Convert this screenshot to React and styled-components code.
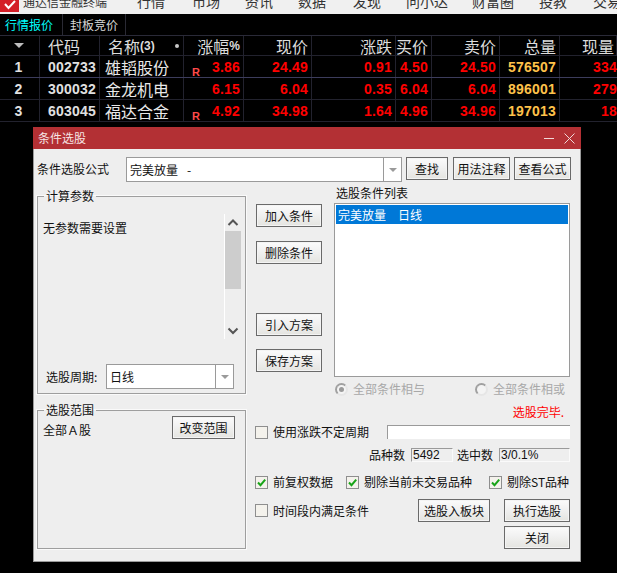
import React from 'react';
import styled, { createGlobalStyle } from 'styled-components';

const CJK = '"Noto Sans CJK SC", "Liberation Sans", sans-serif';
const NUM = '"Liberation Sans", "Noto Sans CJK SC", sans-serif';

const Global = createGlobalStyle`
  html, body { margin: 0; padding: 0; background: #000; }
  * { box-sizing: border-box; }
`;

const Page = styled.div`
  position: relative;
  width: 617px;
  height: 573px;
  overflow: hidden;
  background: #000;
  font-family: ${CJK};
`;

/* ---------- top menu ---------- */
const TopBar = styled.header`
  height: 14px;
  background: #f0f0f0;
  display: flex;
  align-items: flex-end;
  overflow: hidden;
  color: #333;
`;
const Logo = styled.svg`
  flex: none;
  width: 20px;
  height: 13px;
  align-self: flex-start;
  margin-right: 3px;
`;
const Brand = styled.span`
  flex: none;
  width: 114px;
  font-size: 12px;
  line-height: 14px;
  margin-bottom: 5px;
  white-space: nowrap;
`;
const NavItem = styled.span`
  flex: none;
  width: ${p => p.$w}px;
  font-size: 14px;
  line-height: 16px;
  margin-bottom: 5px;
  white-space: nowrap;
`;

/* ---------- tabs ---------- */
const Tabs = styled.nav`
  height: 21px;
  display: flex;
  background: #000;
`;
const Tab = styled.div`
  width: ${p => p.$w}px;
  padding-left: ${p => p.$pl}px;
  font-size: 12px;
  line-height: 21px;
  color: ${p => (p.$active ? '#00ffff' : '#d8d8d8')};
  border-right: 1px solid #2a2a34;
`;

/* ---------- quote table ---------- */
const COLS = '40px 60px 84px 60px 68px 84px 36px 68px 60px 57px';
const TableRow = styled.div`
  display: grid;
  grid-template-columns: ${COLS};
  height: ${p => (p.$head ? 21 : 22)}px;
  background: #000;
  border-top: ${p => (p.$head ? '1px solid #2a2a38' : 'none')};
  border-bottom: 1px solid ${p => (p.$strong ? '#3c3c5c' : '#22222e')};
`;
const Cell = styled.div`
  display: flex;
  align-items: center;
  justify-content: ${p => p.$align || 'flex-end'};
  padding: ${p => p.$pad || '1px 3px 0 0'};
  border-right: 1px solid #22222e;
  overflow: hidden;
  white-space: nowrap;
  color: ${p => p.$color || '#ff0000'};
  font-family: ${NUM};
  font-weight: 700;
  font-size: 14px;
  letter-spacing: 0.2px;
`;
const HeadCell = styled(Cell)`
  font-family: ${CJK};
  font-weight: 400;
  font-size: 16px;
  letter-spacing: 0;
  color: #dcdcdc;
`;
const NameCell = styled(Cell)`
  font-family: ${CJK};
  font-weight: 400;
  font-size: 16px;
  letter-spacing: 0;
  color: #e8e8e8;
`;
const LastCell = styled(Cell)`
  border-right: none;
`;
const Small = styled.b`
  font-family: ${NUM};
  font-size: 12px;
`;
const RMark = styled.span`
  position: absolute;
  left: 8px;
  bottom: -1px;
  font-size: 11px;
  line-height: 12px;
  color: #ff4a4a;
`;
const PctCell = styled(Cell)`
  position: relative;
`;
const SortArrow = styled.i`
  width: 0;
  height: 0;
  border-left: 5px solid transparent;
  border-right: 5px solid transparent;
  border-top: 5px solid #bdbdbd;
`;
const Dot = styled.i`
  position: absolute;
  right: 4px;
  top: 8px;
  width: 4px;
  height: 4px;
  border-radius: 50%;
  background: #c8c8c8;
`;
const NameHead = styled(HeadCell)`
  position: relative;
`;

/* ---------- dialog ---------- */
const Dialog = styled.section`
  position: absolute;
  left: 33px;
  top: 127px;
  width: 548px;
  height: 435px;
  background: #eeeeee;
  border: 1px solid #9a9a9a;
  border-top: none;
  font-size: 12px;
  line-height: 14px;
  color: #111;
`;
const TitleBar = styled.div`
  height: 22px;
  margin: 0 -1px;
  padding: 0 5px;
  background: #b33034;
  display: flex;
  align-items: center;
  justify-content: space-between;
  color: #f6e4e4;
`;
const WinIcons = styled.svg`
  width: 32px;
  height: 12px;
`;
const Body = styled.div`
  padding: 8px 9px 0 3px;
`;
const FormulaRow = styled.div`
  display: flex;
  align-items: flex-start;
  height: 25px;
`;
const FormulaLabel = styled.label`
  width: 89px;
  line-height: 23px;
`;
const Combo = styled.div`
  display: flex;
  width: ${p => p.$w}px;
  height: ${p => p.$h}px;
  margin-right: ${p => p.$mr || 0}px;
  background: #fff;
  border: 1px solid #9a9a9a;
`;
const ComboText = styled.div`
  flex: 1;
  padding-left: 3px;
  line-height: ${p => p.$h - 2}px;
  white-space: pre;
`;
const ComboButton = styled.div`
  flex: none;
  width: 18px;
  border-left: 1px solid #9a9a9a;
  display: flex;
  align-items: center;
  justify-content: center;
  &::after {
    content: '';
    border-left: 4px solid transparent;
    border-right: 4px solid transparent;
    border-top: 4px solid #9a9a9a;
  }
`;
const Btn = styled.button`
  display: block;
  flex: none;
  width: ${p => p.$w || 66}px;
  height: 23px;
  margin: ${p => p.$m || 0};
  padding: 0;
  border: 1px solid #6a6a6a;
  background: linear-gradient(#fbfbfb, #f2f2f2 40%, #e4e4e0);
  box-shadow: inset 0 0 0 1px #f4f4f4;
  font-family: ${CJK};
  font-size: 12px;
  line-height: 14px;
  color: #111;
  white-space: nowrap;
`;
const Main = styled.div`
  display: grid;
  grid-template-columns: 209px 314px;
  column-gap: 10px;
`;
const LeftCol = styled.div`
  padding-top: 7px;
  display: flex;
  flex-direction: column;
  gap: 9px;
`;
const Group = styled.fieldset`
  margin: 0;
  height: ${p => p.$h}px;
  padding: 0 5px;
  border: 1px solid #9e9e9e;
  box-shadow: 0 0 0 1px #fafafa;
  min-width: 0;
`;
const Legend = styled.legend`
  margin-left: 1px;
  padding: 0 2px;
  height: 14px;
  font-size: 12px;
  line-height: 14px;
`;
const ParamArea = styled.div`
  display: flex;
  height: 125px;
  margin-top: 11px;
`;
const ParamText = styled.div`
  flex: 1;
  padding-top: 7px;
`;
const ScrollBar = styled.div`
  flex: none;
  width: 17px;
  border-left: 1px solid #fff;
  display: flex;
  flex-direction: column;
  margin-right: -1px;
`;
const ScrollArrow = styled.svg`
  flex: none;
  display: block;
  width: 16px;
  height: 17px;
`;
const ScrollTrack = styled.div`
  flex: 1;
`;
const ScrollThumb = styled.div`
  height: 58px;
  background: #cdcdcd;
`;
const PeriodRow = styled.div`
  display: flex;
  align-items: center;
  margin-top: 25px;
  padding-left: 3px;
`;
const PeriodLabel = styled.label`
  width: 60px;
`;
const ScopeRow = styled.div`
  display: flex;
  justify-content: space-between;
  align-items: flex-start;
  margin-top: -1px;
  padding-right: 5px;
`;
const ScopeText = styled.div`
  padding-top: 7px;
`;
const RightCol = styled.div`
  display: flex;
  flex-direction: column;
`;
const Upper = styled.div`
  display: flex;
  gap: 12px;
`;
const ActionCol = styled.div`
  width: 66px;
  padding-top: 22px;
`;
const ListCol = styled.div`
  width: 236px;
`;
const ListLabel = styled.div`
  height: 21px;
  padding: 4px 0 0 2px;
`;
const ListBox = styled.div`
  height: 174px;
  padding: 1px;
  background: #fff;
  border: 1px solid #9a9a9a;
`;
const ListItem = styled.div`
  height: 19px;
  padding-left: 2px;
  line-height: 19px;
  white-space: pre;
  background: #0078d7;
  color: #fff;
`;
const RadioRow = styled.div`
  display: flex;
  height: 14px;
  margin: 5px 0 0 79px;
  color: #a8a8a8;
`;
const RadioItem = styled.div`
  display: flex;
  align-items: center;
  gap: 5px;
  width: ${p => p.$w}px;
`;
const Radio = styled.i`
  flex: none;
  width: 13px;
  height: 13px;
  border-radius: 50%;
  border: 2px solid;
  border-color: #a0a0a0 #e6e6e6 #e6e6e6 #a0a0a0;
  background: #f4f4f4;
  display: flex;
  align-items: center;
  justify-content: center;
  &::after {
    content: '';
    width: 5px;
    height: 5px;
    border-radius: 50%;
    background: ${p => (p.$on ? '#9a9a9a' : 'transparent')};
  }
`;
const Status = styled.div`
  height: 14px;
  margin-top: 9px;
  padding-right: 6px;
  text-align: right;
  color: #ff0000;
`;
const CheckRow = styled.div`
  display: flex;
  align-items: center;
  justify-content: ${p => p.$justify || 'flex-start'};
  height: 14px;
  margin-top: ${p => p.$mt}px;
  margin-left: -1px;
`;
const CheckItem = styled.label`
  display: flex;
  align-items: center;
  gap: 5px;
  width: ${p => p.$w}px;
  flex: none;
  white-space: nowrap;
`;
const Box = styled.span`
  flex: none;
  width: 13px;
  height: 13px;
  border: 1px solid #8e8e8e;
  background: #f4f2ec;
  display: block;
`;
const Check = styled.svg`
  display: block;
  width: 11px;
  height: 11px;
`;
const BlankInput = styled.div`
  width: 183px;
  height: 14px;
  background: #fff;
  border-top: 1px solid #9a9a9a;
  border-left: 1px solid #9a9a9a;
`;
const CountLabel = styled.span`
  margin-right: 6px;
`;
const CountBox = styled.div`
  width: ${p => p.$w}px;
  height: 14px;
  margin-right: ${p => p.$mr || 0}px;
  padding-left: 1px;
  line-height: 13px;
  font-family: "Liberation Sans", sans-serif;
  background: #eeeeee;
  border-top: 1px solid #9a9a9a;
  border-left: 1px solid #9a9a9a;
  border-bottom: 1px solid #fafafa;
  border-right: 1px solid #fafafa;
`;
const BottomRow = styled.div`
  display: flex;
  align-items: center;
  margin: 10px 0 0 -1px;
`;
const CloseRow = styled.div`
  display: flex;
  justify-content: flex-end;
  margin-top: 4px;
`;

const rows = [
  ['1', '002733', '雄韬股份', true, '3.86', '24.49', '0.91', '4.50', '24.50', '576507', '334'],
  ['2', '300032', '金龙机电', false, '6.15', '6.04', '0.35', '6.04', '6.04', '896001', '279'],
  ['3', '603045', '福达合金', true, '4.92', '34.98', '1.64', '4.96', '34.96', '197013', '18'],
];

const nav = [
  ['行情', 55], ['市场', 53], ['资讯', 53], ['数据', 55], ['发现', 53],
  ['问小达', 66], ['财富圈', 67], ['投教', 54], ['交易', 40],
];

const Tick = () => (
  <Check viewBox="0 0 11 11">
    <path d="M2 5.5 L4.5 8.2 L9.2 2.6" fill="none" stroke="#18a418" strokeWidth="2" />
  </Check>
);

const ChevronUp = () => (
  <ScrollArrow viewBox="0 0 16 17">
    <path d="M3.5 11 L8 6.5 L12.5 11" fill="none" stroke="#555" strokeWidth="2" />
  </ScrollArrow>
);
const ChevronDown = () => (
  <ScrollArrow viewBox="0 0 16 17">
    <path d="M3.5 6.5 L8 11 L12.5 6.5" fill="none" stroke="#555" strokeWidth="2" />
  </ScrollArrow>
);

export default function App() {
  return (
    <Page>
      <Global />
      <TopBar>
        <Logo viewBox="0 0 20 13">
          <rect x="0" y="0" width="19" height="12" fill="#d41f27" />
          <path d="M5 4 L8.5 8 L15 1" fill="none" stroke="#fff" strokeWidth="2" />
        </Logo>
        <Brand>通达信金融终端</Brand>
        {nav.map(([t, w]) => <NavItem key={t} $w={w}>{t}</NavItem>)}
      </TopBar>

      <Tabs>
        <Tab $active $w={63} $pl={5}>行情报价</Tab>
        <Tab $w={63} $pl={7}>封板竞价</Tab>
      </Tabs>

      <TableRow $head>
        <HeadCell $align="center" $pad="0 2px 0 0"><SortArrow /></HeadCell>
        <HeadCell $align="flex-start" $pad="0 0 0 8px">代码</HeadCell>
        <NameHead $align="flex-start" $pad="0 0 0 8px">名称<Small>(3)</Small><Dot /></NameHead>
        <HeadCell>涨幅<Small>%</Small></HeadCell>
        <HeadCell>现价</HeadCell>
        <HeadCell>涨跌</HeadCell>
        <HeadCell>买价</HeadCell>
        <HeadCell>卖价</HeadCell>
        <HeadCell>总量</HeadCell>
        <HeadCell $pad="0 2px 0 0">现量</HeadCell>
      </TableRow>
      {rows.map((r, i) => (
        <TableRow key={r[0]} $strong={i === 0}>
          <Cell $align="center" $pad="1px 2px 0 0" $color="#e0e0e0">{r[0]}</Cell>
          <Cell $align="flex-start" $pad="1px 0 0 8px" $color="#e0e0e0">{r[1]}</Cell>
          <NameCell $align="flex-start" $pad="0 0 0 5px">{r[2]}</NameCell>
          <PctCell>{r[3] && <RMark>R</RMark>}{r[4]}</PctCell>
          <Cell>{r[5]}</Cell>
          <Cell>{r[6]}</Cell>
          <Cell>{r[7]}</Cell>
          <Cell>{r[8]}</Cell>
          <Cell $color="#ffc24a">{r[9]}</Cell>
          <LastCell $pad="1px 0 0 0">{r[10]}</LastCell>
        </TableRow>
      ))}

      <Dialog>
        <TitleBar>
          <span>条件选股</span>
          <WinIcons viewBox="0 0 32 12">
            <path d="M0 6.5 H10" stroke="#f0d8d8" strokeWidth="1" />
            <path d="M20.5 1.5 L30.5 11.5 M30.5 1.5 L20.5 11.5" stroke="#f0d8d8" strokeWidth="1" />
          </WinIcons>
        </TitleBar>
        <Body>
          <FormulaRow>
            <FormulaLabel>条件选股公式</FormulaLabel>
            <Combo $w={276} $h={25} $mr={4}>
              <ComboText $h={25}>{'完美放量\u2002\u2005-'}</ComboText>
              <ComboButton />
            </Combo>
            <Btn $w={42} $m="0 5px 0 0">查找</Btn>
            <Btn $w={57} $m="0 4px 0 0">用法注释</Btn>
            <Btn $w={57}>查看公式</Btn>
          </FormulaRow>
          <Main>
            <LeftCol>
              <Group $h={205}>
                <Legend>计算参数</Legend>
                <ParamArea>
                  <ParamText>无参数需要设置</ParamText>
                  <ScrollBar>
                    <ChevronUp />
                    <ScrollTrack><ScrollThumb /></ScrollTrack>
                    <ChevronDown />
                  </ScrollBar>
                </ParamArea>
                <PeriodRow>
                  <PeriodLabel>选股周期:</PeriodLabel>
                  <Combo $w={128} $h={25}>
                    <ComboText $h={25}>日线</ComboText>
                    <ComboButton />
                  </Combo>
                </PeriodRow>
              </Group>
              <Group $h={146}>
                <Legend>选股范围</Legend>
                <ScopeRow>
                  <ScopeText>全部Ａ股</ScopeText>
                  <Btn $w={63}>改变范围</Btn>
                </ScopeRow>
              </Group>
            </LeftCol>
            <RightCol>
              <Upper>
                <ActionCol>
                  <Btn>加入条件</Btn>
                  <Btn $m="14px 0 0">删除条件</Btn>
                  <Btn $m="49px 0 0">引入方案</Btn>
                  <Btn $m="13px 0 0">保存方案</Btn>
                </ActionCol>
                <ListCol>
                  <ListLabel>选股条件列表</ListLabel>
                  <ListBox>
                    <ListItem>{'完美放量\u2002\u2002日线'}</ListItem>
                  </ListBox>
                </ListCol>
              </Upper>
              <RadioRow>
                <RadioItem $w={140}><Radio $on />全部条件相与</RadioItem>
                <RadioItem $w={92}><Radio />全部条件相或</RadioItem>
              </RadioRow>
              <Status>选股完毕.</Status>
              <CheckRow $mt={6}>
                <CheckItem $w={132}><Box />使用涨跌不定周期</CheckItem>
                <BlankInput />
              </CheckRow>
              <CheckRow $mt={9} $justify="flex-end">
                <CountLabel>品种数</CountLabel>
                <CountBox $w={42} $mr={4}>5492</CountBox>
                <CountLabel>选中数</CountLabel>
                <CountBox $w={71}>3/0.1%</CountBox>
              </CheckRow>
              <CheckRow $mt={13}>
                <CheckItem $w={91}><Box><Tick /></Box>前复权数据</CheckItem>
                <CheckItem $w={143}><Box><Tick /></Box>剔除当前未交易品种</CheckItem>
                <CheckItem $w={80}><Box><Tick /></Box>剔除ST品种</CheckItem>
              </CheckRow>
              <BottomRow>
                <CheckItem $w={163}><Box />时间段内满足条件</CheckItem>
                <Btn $w={72} $m="0 14px 0 0">选股入板块</Btn>
                <Btn>执行选股</Btn>
              </BottomRow>
              <CloseRow>
                <Btn>关闭</Btn>
              </CloseRow>
            </RightCol>
          </Main>
        </Body>
      </Dialog>
    </Page>
  );
}
